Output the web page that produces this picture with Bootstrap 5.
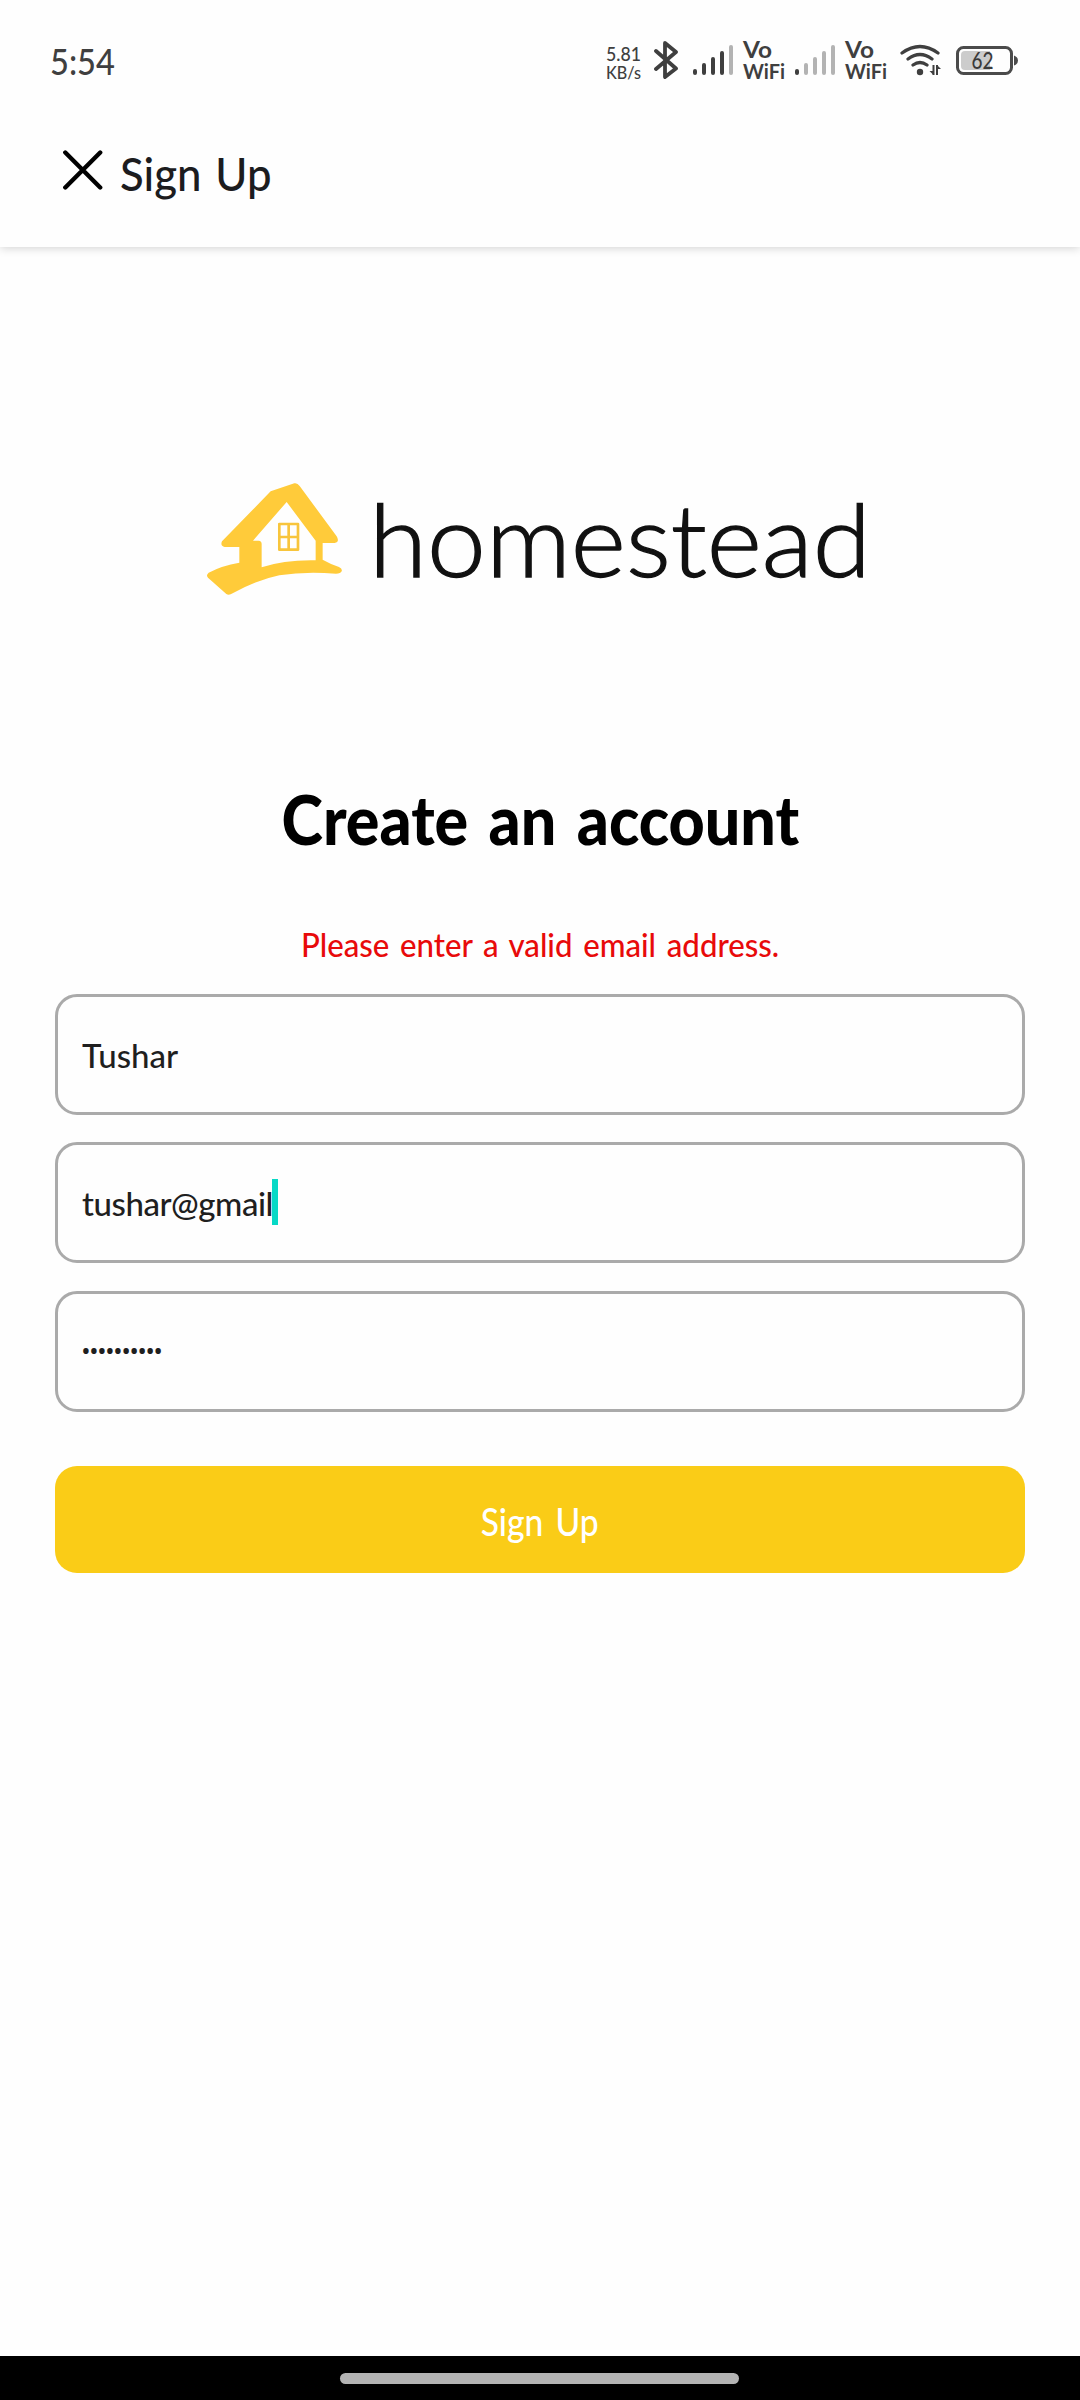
<!DOCTYPE html>
<html lang="en">
<head>
<meta charset="utf-8">
<meta name="viewport" content="width=device-width, initial-scale=1">
<title>Sign Up</title>
<link rel="stylesheet" href="https://cdn.jsdelivr.net/npm/bootstrap@5.3.0/dist/css/bootstrap.min.css">
<style>
body{font-family:Lato,sans-serif;background:#fefefe;color:#1c1c1e;height:2400px;overflow:hidden}
svg{display:block;flex:none}
svg text{font-family:Lato,sans-serif}
.top-area{height:247px;background:#fefefe;box-shadow:0 1px 9px rgba(0,0,0,.18)}
.status{height:120px;padding:40px 62px 0 50px;color:#3f3f3f}
.clock{font-size:36px;line-height:42px;font-weight:500}
.squeeze{display:inline-block;white-space:nowrap;transform-origin:left center}
.clock .squeeze{transform:scaleX(.905)}
.title-row{height:104px;padding-left:63px}
.title-row .squeeze{font-size:47px;line-height:60px;font-weight:500;margin:2px 0 0 17px;word-spacing:3px;transform:scaleX(.93)}
.close-icon{margin-top:30px}
.form-area{padding:0 55px}
.logo{margin:213px 0 0 135px}
.heading{font-size:69px;font-weight:900;line-height:80px;color:#000;margin:169px 0 0;height:80px}
.heading .squeeze{transform:scaleX(.91);transform-origin:center;word-spacing:6px}
.error{font-size:33px;line-height:44px;color:#e80a0a;font-weight:500;margin-top:63px;height:44px}
.error .squeeze{transform:scaleX(.945);transform-origin:center;word-spacing:3px}
.field{height:121px;border:3px solid #aaa;border-radius:22px;font-size:33px;font-weight:500;color:#1f1f1f;padding:0 24px;background:#fefefe}
.field.email{letter-spacing:-.45px}
.field.secret{font-family:"Open Sans",sans-serif;font-size:26px;letter-spacing:-1.75px;padding:0 24px 4px 23px;margin-top:1px}
.fields{margin-top:28px;gap:27px}
.caret{position:absolute;left:217px;top:37px;width:6px;height:46px;background:#07d9c6}
.submit{height:107px;border-radius:22px;background:#facc17;color:#fff;font-size:38px;font-weight:500;margin-top:54px;border:0;padding:4px 0 0}
.submit .squeeze{transform:scaleX(.885);transform-origin:center;word-spacing:4px}
.submit:hover{background:#facc17;color:#fff}
.navbar-strip{height:44px;background:#000}
.handle{width:399px;height:11px;border-radius:6px;background:#b3b3b3;margin-right:1px}
</style>
</head>
<body class="d-flex flex-column">
<header class="top-area flex-shrink-0">
  <div class="status d-flex justify-content-between align-items-start">
    <div class="clock"><span class="squeeze">5:54</span></div>
    <div class="d-flex">
      <svg width="48" height="42" fill="#3f3f3f"><text x="0" y="21" font-size="19" font-weight="500" textLength="35" lengthAdjust="spacingAndGlyphs">5.81</text><text x="0" y="39" font-size="18" font-weight="500" textLength="35" lengthAdjust="spacingAndGlyphs">KB/s</text></svg>
      <svg width="38" height="42" fill="none" stroke="#3f3f3f" stroke-width="3.8" stroke-linecap="round" stroke-linejoin="round"><path d="M2 11 22 28.500 11 37V3L22 12 2 29"/></svg>
      <svg width="50" height="42" stroke="#3f3f3f" stroke-width="4" stroke-linecap="round"><path d="M3 31v2M12 25v8M21 19v14M30 13v20"/><path stroke="#b3b3b3" d="M39 7v26"/></svg>
      <svg width="53" height="42" fill="#3f3f3f"><text x="1" y="17.500" font-size="22" font-weight="700" textLength="29" lengthAdjust="spacingAndGlyphs">Vo</text><text x="1" y="38.500" font-size="21" font-weight="700" textLength="42" lengthAdjust="spacingAndGlyphs">WiFi</text></svg>
      <svg width="49" height="42" stroke="#b3b3b3" stroke-width="4" stroke-linecap="round"><path stroke="#3f3f3f" d="M2 31v2"/><path d="M11 25v8M20 19v14M29 13v20M38 7v26"/></svg>
      <svg width="56" height="42" fill="#3f3f3f"><text x="1" y="17.500" font-size="22" font-weight="700" textLength="29" lengthAdjust="spacingAndGlyphs">Vo</text><text x="1" y="38.500" font-size="21" font-weight="700" textLength="42" lengthAdjust="spacingAndGlyphs">WiFi</text></svg>
      <svg width="56" height="42" fill="none" stroke="#3f3f3f" stroke-width="3.200" stroke-linecap="round"><path d="M2 13Q20 0 38 13M8 19Q20 10 32 19M13 25Q20 20 27 25"/><circle cx="20" cy="32" r="3.200" fill="#3f3f3f" stroke="none"/><path stroke-width="2" stroke-linecap="butt" d="M33.500 25v10M37 25v10"/><path fill="#3f3f3f" stroke="none" d="M29.500 31h4v4zM41 29h-4v-4z"/></svg>
      <svg width="62" height="42"><rect x="1.500" y="7.500" width="54" height="26" rx="6" fill="none" stroke="#4b4b4b" stroke-width="3"/><path fill="#ccc" d="M9 11h25v19H9q-4 0-4-4V15q0-4 4-4z"/><path fill="#4b4b4b" d="M58 15.500q4 1.500 4 5t-4 5z"/><text x="15.500" y="29" font-size="23" font-weight="500" fill="#3a3a3a" textLength="22" lengthAdjust="spacingAndGlyphs">62</text></svg>
    </div>
  </div>
  <div class="title-row d-flex align-items-center">
    <svg width="40" height="40" class="close-icon align-self-start" stroke="#000" stroke-width="4.400" stroke-linecap="round" role="img" aria-label="Close"><path d="M2.300 2.500 37.200 37.500M37.200 2.500 2.300 37.500"/></svg>
    <span class="squeeze">Sign Up</span>
  </div>
</header>
<main class="form-area flex-grow-1">
  <svg class="logo" width="700" height="150" role="img" aria-label="homestead">
    <g transform="scale(.3333)">
      <path fill="#ffcb3a" d="M242 94 313 70Q322 68 329 78L440 229Q450 246 434 249H398V299Q425 314 447 321Q458 326 455 334Q452 341 438 341Q345 333 268 346Q200 360 128 400Q117 407 109 402L54 353Q47 346 56 338Q95 317 148 308V261H104Q90 258 96 244Z"/>
      <path fill="#fefefe" d="M290 126 189 242H206Q215 243 215 252V322Q285 299 377 301V242Z"/>
      <path fill="none" stroke="#f8c53c" stroke-width="8" stroke-linejoin="round" d="M268 192h56v77h-56zM296 192v77M268 231h56"/>
    </g>
    <text x="179" y="116.500" font-size="100" font-weight="300" fill="#111" stroke="#111" stroke-width="1.300" textLength="502" lengthAdjust="spacingAndGlyphs">homestead</text>
  </svg>
  <h1 class="heading text-center"><span class="squeeze">Create an account</span></h1>
  <div class="error text-center"><span class="squeeze">Please enter a valid email address.</span></div>
  <form class="fields d-flex flex-column">
    <input class="form-control field" type="text" value="Tushar" aria-label="Name">
    <div class="position-relative">
      <input class="form-control field email" type="text" value="tushar@gmail" aria-label="Email">
      <span class="caret"></span>
    </div>
    <input class="form-control field secret" type="text" value="••••••••••" aria-label="Password">
  </form>
  <button type="button" class="btn submit w-100"><span class="squeeze">Sign Up</span></button>
</main>
<footer class="navbar-strip flex-shrink-0 d-flex justify-content-center align-items-center"><div class="handle"></div></footer>
<script src="https://cdn.jsdelivr.net/npm/bootstrap@5.3.0/dist/js/bootstrap.bundle.min.js"></script>
</body>
</html>
